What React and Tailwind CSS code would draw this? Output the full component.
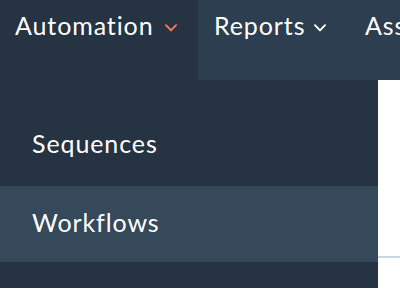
import React from 'react';

const Chevron = ({ className }) => (
    <svg viewBox="0 0 12 8" className={className} fill="none" stroke="currentColor" strokeWidth="1.9" strokeLinecap="round" strokeLinejoin="round">
        <path d="M1 1.2 L6 6.4 L11 1.2" />
    </svg>
);

export default function App() {
    return (
        <div className="w-[400px] h-[306px] bg-white overflow-hidden text-white text-[25px] tracking-[0.9px]" style={{ fontFamily: 'Lato, "Open Sans", sans-serif' }}>
            {/* Top nav */}
            <div className="h-[80px] bg-[#2d3e50] flex whitespace-nowrap">
                <div className="w-[198px] shrink-0 bg-[#253342] flex items-center pl-[15px] pb-[28px]">
                    <span>Automation</span>
                    <Chevron className="w-[12px] h-[8px] ml-[11px] mt-[3px] text-[#ff7a59]" />
                </div>
                <div className="w-[151px] shrink-0 flex items-center pl-4 pb-[28px]">
                    <span>Reports</span>
                    <Chevron className="w-[12px] h-[8px] ml-[9px] mt-[3px] text-white" />
                </div>
                <div className="shrink-0 flex items-center pl-4 pb-[28px]">Assets</div>
            </div>

            {/* Dropdown + page */}
            <div className="flex">
                <div className="w-[378px] bg-[#253342] pt-[28px] pb-[26px] shrink-0">
                    <div className="h-[78px] flex items-center pl-8 pb-[6px]">Sequences</div>
                    <div className="h-[76px] flex items-center pl-8 pb-[2px] bg-[#35495b]">Workflows</div>
                </div>
                <div className="flex-1 pt-[176px]">
                    <div className="h-[2px] bg-[#cbd6e2]" />
                </div>
            </div>
        </div>
    );
}
